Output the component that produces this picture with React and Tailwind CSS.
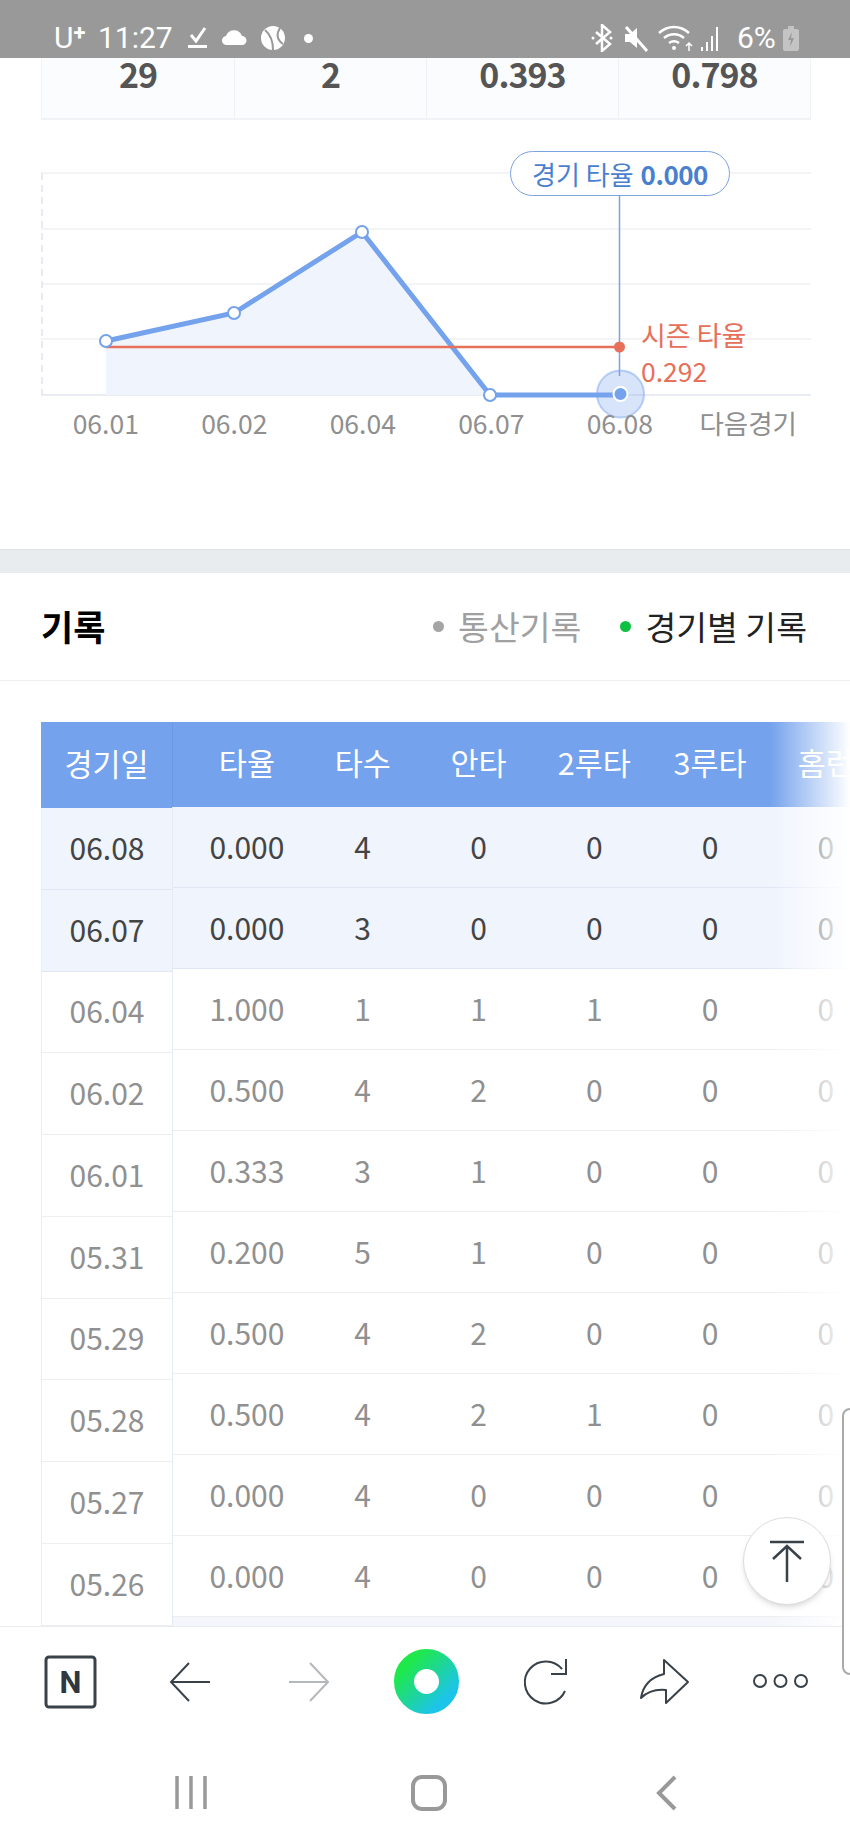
const KR = "font-['Noto_Sans_CJK_KR',sans-serif]";

const stats = ['29', '2', '0.393', '0.798'];
const axis = ['06.01', '06.02', '06.04', '06.07', '06.08', '다음경기'];
const heads = ['타율', '타수', '안타', '2루타', '3루타', '홈런'];
const rows = [
	['06.08', '0.000', 4, 0, 0, 0, 0, true],
	['06.07', '0.000', 3, 0, 0, 0, 0, true],
	['06.04', '1.000', 1, 1, 1, 0, 0],
	['06.02', '0.500', 4, 2, 0, 0, 0],
	['06.01', '0.333', 3, 1, 0, 0, 0],
	['05.31', '0.200', 5, 1, 0, 0, 0],
	['05.29', '0.500', 4, 2, 0, 0, 0],
	['05.28', '0.500', 4, 2, 1, 0, 0],
	['05.27', '0.000', 4, 0, 0, 0, 0],
	['05.26', '0.000', 4, 0, 0, 0, 0],
];

const StatusBar = () => (
	<div className="flex h-[58px] shrink-0 items-center bg-[#999999] pt-[18px] font-['Roboto',sans-serif] text-white">
		<span className="ml-[54px] flex w-[38px] items-start text-[30px] leading-none">
			U<span className="text-[22px] font-bold leading-[20px]">+</span>
		</span>
		<span className="ml-[6px] w-[82px] text-[30px] leading-none">11:27</span>
		<svg className="ml-[8px]" width="100" height="26" viewBox="0 0 100 26" fill="white">
			<path d="M3 10l5 6 9-13" fill="none" stroke="white" strokeWidth="3" />
			<rect x="0" y="20" width="19" height="3" />
			<path d="M39 20a4.500 4.500 0 0 1-1-9 8.500 8.500 0 0 1 16 0 4.500 4.500 0 0 1 0 9z" />
			<circle cx="85" cy="13" r="12" />
			<path d="M77 5c6 5 8 11 8 20M92 3c-4 6-3 12 3 16" fill="none" stroke="#999999" strokeWidth="2" />
		</svg>
		<span className="ml-[16px] h-[9px] w-[9px] rounded-full bg-white" />
		<svg className="ml-[278px]" width="132" height="28" viewBox="0 0 132 28" fill="none" stroke="white">
			<path d="M5 8l14 12-8 7V1l8 7L5 20" strokeWidth="2.5" />
			<circle cx="2" cy="14" r="1.500" fill="white" stroke="none" />
			<circle cx="20" cy="14" r="1.500" fill="white" stroke="none" />
			<path d="M34 10h5l7-6v20l-7-6h-5z" fill="white" stroke="none" />
			<path d="M35 3l21 24" strokeWidth="3" />
			<path d="M68 9c9-8 21-8 30 0M73 14c6-5 14-5 20 0M78 19c3-2 7-2 10 0" strokeWidth="2.500" />
			<circle cx="83" cy="24" r="2" fill="white" stroke="none" />
			<path d="M98 27v-8M95 22l3-3 3 3" strokeWidth="1.500" />
			<path d="M111 27v-4M116 27v-9M121 27V12M126 27V3" strokeWidth="2" />
		</svg>
		<span className="ml-[14px] w-[46px] text-[30px] leading-none">6%</span>
		<svg width="16" height="25" viewBox="0 0 16 25" fill="none">
			<path d="M5 0h6v3H5z" fill="#c4c4c4" />
			<rect y="3" width="16" height="22" rx="2" fill="#c4c4c4" />
			<path d="M9 6l-4 8h3l-1 7 4-9H8z" fill="#999999" />
		</svg>
	</div>
);

const Chart = () => (
	<div className="relative h-[429px] shrink-0">
		<svg className="block overflow-visible" width="850" height="288" viewBox="0 120 850 288" fill="none">
			{[173, 229, 284, 339, 395].map((y) => (
				<line key={y} x1="41" x2="811" y1={y} y2={y} stroke={y === 395 ? '#e9edf3' : '#f3f4f6'} strokeWidth="2" />
			))}
			<line x1="42" x2="42" y1="173" y2="395" stroke="#dfe4ee" strokeWidth="1.5" strokeDasharray="7 5" />
			<path d="M106 341L234 313L362 232L490 395H106z" fill="#f0f5fd" />
			<path d="M106 341L234 313L362 232L490 395H620" stroke="#74a2ec" strokeWidth="5" />
			<line x1="106" x2="620" y1="347" y2="347" stroke="#e6705a" strokeWidth="2.5" />
			<circle cx="620.5" cy="394" r="23.5" fill="#7ba6ee" fillOpacity="0.3" stroke="#7ba6ee" strokeOpacity="0.5" strokeWidth="2" />
			<line x1="619.5" x2="619.5" y1="196" y2="376" stroke="#7ba3e0" strokeWidth="1.5" />
			<circle cx="619.5" cy="347" r="5.5" fill="#e6705a" />
			{[[106, 341], [234, 313], [362, 232], [490, 395]].map(([x, y]) => (
				<circle key={x} cx={x} cy={y} r="6" fill="white" stroke="#74a2ec" strokeWidth="2" />
			))}
			<circle cx="620.5" cy="394" r="7" fill="#74a2ec" stroke="white" strokeWidth="2" />
		</svg>
		<div className="absolute left-[510px] top-[31px] flex h-[45px] w-[220px] items-center justify-center gap-[7px] rounded-full border-[1.5px] border-[#7ba3e0] bg-white pb-[1px] text-[26px] text-[#4a7fd0]">
			<span>경기 타율</span>
			<span className="font-bold tracking-[-0.5px]">0.000</span>
		</div>
		<div className="absolute left-[641px] top-[197px] text-[27px] leading-[36px] text-[#e6705a]">
			<p>시즌 타율</p>
			<p className="text-[26.5px]">0.292</p>
		</div>
		<div className="ml-[41.5px] grid w-[771px] grid-cols-6 text-center text-[26.5px] leading-[30px] text-[#8f8f8f]">
			{axis.map((label) => (
				<span key={label}>{label}</span>
			))}
		</div>
	</div>
);

const RecordTable = () => (
	<div className="relative mt-[41px] flex h-[904px] shrink-0 overflow-hidden">
		<div className="ml-[41px] w-[131px] shrink-0 border-l border-[#eeeeee]">
			<div className="-ml-px flex h-[86px] items-center justify-center bg-[#74a2ec] pb-[3px] text-[30.5px] text-white">경기일</div>
			{rows.map((r) => (
				<div
					key={r[0]}
					className={`flex h-[81.75px] items-center justify-center border-b pb-[2px] text-[30px] ${
						r[7] ? 'border-[#dfe7f5] bg-[#eff4fd] text-[#444444]' : 'border-[#eeeeee] text-[#909090]'
					}`}
				>
					{r[0]}
				</div>
			))}
		</div>
		<div className="min-w-0 flex-1 border-l border-[#e6ebf3]">
			<div className="-ml-px flex h-[85px] items-center border-l border-[#6c9ae4] bg-[#74a2ec] pb-[3px] pl-[16px] text-[30.5px] text-white">
				{heads.map((h) => (
					<span key={h} className="w-[115.8px] shrink-0 text-center">{h}</span>
				))}
			</div>
			{rows.map((r) => (
				<div
					key={r[0]}
					className={`flex h-[81px] items-center border-b pb-[2px] pl-[16px] text-[30px] ${
						r[7] ? 'border-[#dfe7f5] bg-[#eff4fd] text-[#444444]' : 'border-[#eeeeee] text-[#909090]'
					}`}
				>
					{r.slice(1, 7).map((v, i) => (
						<span key={i} className="w-[115.8px] shrink-0 text-center">{v}</span>
					))}
				</div>
			))}
			<div className="h-[81px] bg-[#f5f6fb]" />
		</div>
		<div className="absolute inset-y-0 right-0 w-[80px] bg-gradient-to-r from-transparent to-white" />
	</div>
);

const Toolbar = () => (
	<div className="flex h-[216px] shrink-0 flex-col border-t border-[#e8ebf0] bg-white">
		<svg className="block" width="850" height="110" viewBox="0 1626 850 110" fill="none" stroke="#3a4249" strokeWidth="2">
			<defs>
				<linearGradient id="orb" x1="0" y1="0" x2="1" y2="1">
					<stop offset="0.1" stopColor="#1fe84a" />
					<stop offset="0.9" stopColor="#1cc4ea" />
				</linearGradient>
			</defs>
			<rect x="46" y="1656" width="49" height="50" rx="3" strokeWidth="3" />
			<text x="70.5" y="1692" textAnchor="middle" fontSize="31" fontWeight="700" fontFamily="Roboto, sans-serif" fill="#2f3740" stroke="none">N</text>
			<path d="M210 1681h-38M189 1662l-18 19 18 19" />
			<path d="M289 1681h39M310 1662l18 19-18 19" stroke="#b5b8bb" />
			<circle cx="426.5" cy="1680.5" r="22.5" stroke="url(#orb)" strokeWidth="20" />
			<path d="M565 1690a21 21 0 1 1-3-22M566 1658v15h-15" />
			<path d="M664 1659l24 22-22 21v-13c-10-1-18 1-25 8 2-13 11-21 23-24z" strokeLinejoin="round" />
			<circle cx="760" cy="1680" r="6" />
			<circle cx="780.5" cy="1680" r="6" />
			<circle cx="801" cy="1680" r="6" />
		</svg>
		<svg className="block" width="850" height="105" viewBox="0 1736 850 105" fill="none" stroke="#999999" strokeWidth="3.5">
			<path d="M177 1775v33M191 1775v33M205 1775v33" />
			<rect x="413" y="1776" width="32" height="32" rx="9" strokeWidth="4" />
			<path d="M675 1776l-16 16 16 16" strokeWidth="4" />
		</svg>
	</div>
);

export default function App() {
	return (
		<div className={`relative flex h-[1842px] w-[850px] flex-col overflow-hidden bg-white ${KR}`}>
			<StatusBar />
			<div className="ml-[41px] mr-[39px] grid h-[62px] shrink-0 grid-cols-4 border-x border-b-2 border-[#f0f2f5] bg-[#fbfcfe]">
				{stats.map((s, i) => (
					<div key={s} className={`pb-[24px] text-center text-[34px] font-bold leading-[32px] tracking-[-1px] text-[#555555] ${i > 0 ? 'border-l border-[#eef0f3]' : ''}`}>
						{s}
					</div>
				))}
			</div>
			<Chart />
			<div className="h-[24px] shrink-0 border-t border-[#e0e3e6] bg-[#e9ecef]" />
			<div className="flex h-[108px] shrink-0 items-center border-b border-[#f0f0f0] pl-[41px] pr-[43px]">
				<h2 className="text-[35px] font-bold text-black">기록</h2>
				<span className="ml-auto h-[11px] w-[11px] rounded-full bg-[#a5a5a5]" />
				<span className="ml-[14px] text-[33.5px] text-[#a0a0a0]">통산기록</span>
				<span className="ml-[39px] h-[11px] w-[11px] rounded-full bg-[#10c040]" />
				<span className="ml-[14px] text-[33.5px] text-[#222222]">경기별 기록</span>
			</div>
			<RecordTable />
			<Toolbar />
			<button className="absolute left-[743px] top-[1517px] flex h-[88px] w-[88px] items-center justify-center rounded-full border border-[#dddddd] bg-white shadow-md">
				<svg width="36" height="42" viewBox="0 0 36 42" fill="none" stroke="#3a4249" strokeWidth="2.5">
					<path d="M1 2h34M18 6v36M4 19L18 6l14 13" />
				</svg>
			</button>
			<div className="absolute left-[842px] top-[1408px] h-[267px] w-[20px] rounded-l-[8px] border-2 border-[#aaaaaa] bg-white" />
		</div>
	);
}
